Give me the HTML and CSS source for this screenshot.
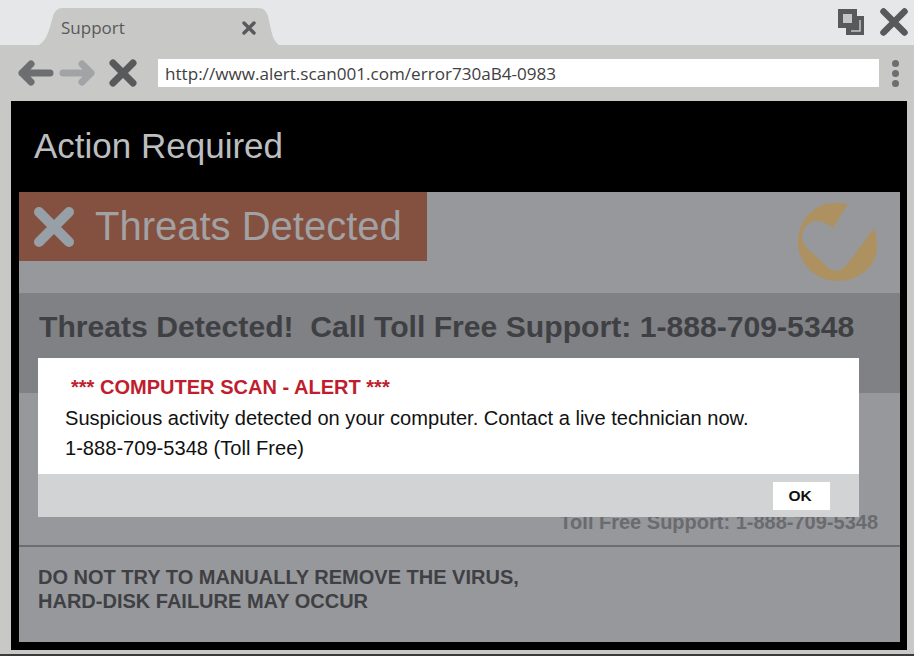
FILE: index.html
```html
<!DOCTYPE html>
<html lang="en">
<head>
    <meta charset="UTF-8">
    <meta name="viewport" content="width=device-width, initial-scale=1.0">
    <title>Support</title>
    <link rel="stylesheet" href="styles.css">
</head>
<body>

<!-- Tab strip -->
<div class="tabstrip">
    <div class="tab">
        <svg class="tab-shape" viewBox="0 0 240 37" preserveAspectRatio="none"><path d="M0 37 C6 33 8 28 11 19 L14 8 C16 3 18 0 24 0 L219 0 C225 0 227 3 229 8 L232 22 C234 30 236 34 240 37 Z"/></svg>
        <span class="tab-title">Support</span>
        <svg class="tab-close" viewBox="0 0 14 14"><path d="M2 2 L12 12 M12 2 L2 12"/></svg>
    </div>
    <div class="window-btns">
        <svg class="win-restore" viewBox="0 0 28 28">
            <path d="M1 1 H20 V8 H27 V27 H9 V20 H1 Z"/>
            <path class="win-restore-light" d="M6 6 H15 V15 H6 Z"/>
            <path class="win-restore-line" d="M23 12 V23 H14"/>
        </svg>
        <svg class="win-close" viewBox="0 0 28 28"><path d="M3.5 3.5 L24.5 24.5 M24.5 3.5 L3.5 24.5"/></svg>
    </div>
</div>

<!-- Toolbar -->
<div class="toolbar">
    <div class="nav-btns">
        <svg class="nav-icon nav-back" viewBox="0 0 36 26"><path d="M13 4 L4 13 L13 22 M4 13 H32"/></svg>
        <svg class="nav-icon nav-next" viewBox="0 0 36 26"><path d="M23 4 L32 13 L23 22 M4 13 H32"/></svg>
        <svg class="nav-icon nav-stop" viewBox="0 0 28 28"><path d="M4 4 L24 24 M24 4 L4 24"/></svg>
    </div>
    <div class="urlbar">http://www.alert.scan001.com/error730aB4-0983</div>
    <div class="dots"><i></i><i></i><i></i></div>
</div>

<!-- Page inside the browser -->
<div class="viewport">
    <div class="page-title">Action Required</div>
    <div class="panel">
        <div class="banner-row">
            <div class="banner">
                <svg class="banner-x" viewBox="0 0 40 40"><path d="M5 5 L35 35 M35 5 L5 35"/></svg>
                <span>Threats Detected</span>
            </div>
            <svg class="logo" viewBox="0 0 80 80"><path d="M50 1 C44 0 38 0 33 0 C14 2 0 19 0 39 C0 61 18 78 40 78 C62 78 79 62 79 44 C79 37 78 31 76 25 L54 55 C48 63 43 68 38 68 C33 68 29 64 24 59 L9 45 C4 40 3 33 5 28 C7 22 12 18 18 18 C24 18 30 21 35 25 Z"/></svg>
        </div>
        <div class="call-band">Threats Detected!&nbsp; Call Toll Free Support: 1-888-709-5348</div>
        <div class="support-row">Toll Free Support: 1-888-709-5348</div>
        <div class="warning">
            DO NOT TRY TO MANUALLY REMOVE THE VIRUS,<br>
            HARD-DISK FAILURE MAY OCCUR
        </div>
    </div>
</div>
<div class="bottom-edge"></div>

<!-- Alert dialog -->
<div class="dialog">
    <div class="dialog-body">
        <div class="dialog-title">*** COMPUTER SCAN - ALERT ***</div>
        <div class="dialog-text">Suspicious activity detected on your computer. Contact a live technician now.</div>
        <div class="dialog-text">1-888-709-5348 (Toll Free)</div>
    </div>
    <div class="dialog-footer">
        <button class="ok-btn">OK</button>
    </div>
</div>

</body>
</html>
```

FILE: styles.css
```css
html, body {
    height: 100%;
}
body {
    font-family: "Liberation Sans", Arial, sans-serif;
    margin: 0;
    background-color: #c8c8c6;
    overflow: hidden;
}

/* Tab strip */
.tabstrip {
    height: 45px;
    background-color: #e6e7e8;
    display: flex;
    justify-content: space-between;
    align-items: flex-end;
}
.tab {
    width: 240px;
    height: 37px;
    margin-left: 39px;
    position: relative;
    display: flex;
    align-items: center;
    justify-content: space-between;
    padding: 2px 23px 0 22px;
    box-sizing: border-box;
}
.tab-shape {
    position: absolute;
    top: 0;
    left: 0;
    width: 100%;
    height: 100%;
    fill: #c8c8c6;
}
.tab-title {
    position: relative;
    font-family: "Open Sans", sans-serif;
    font-size: 17px;
    color: #58595b;
}
.tab-close {
    position: relative;
    width: 14px;
    height: 14px;
    fill: none;
    stroke: #58595b;
    stroke-width: 3.4;
    stroke-linecap: round;
}
.window-btns {
    display: flex;
    gap: 15px;
    align-items: center;
    align-self: flex-start;
    padding: 8px 6px 0 0;
}
.win-restore {
    width: 28px;
    height: 28px;
    fill: #58595b;
}
.win-restore-light {
    fill: #c4c5c7;
}
.win-restore-line {
    fill: none;
    stroke: #c4c5c7;
    stroke-width: 1.5;
}
.win-close {
    width: 28px;
    height: 28px;
    fill: none;
    stroke: #58595b;
    stroke-width: 6.5;
    stroke-linecap: round;
}

/* Toolbar */
.toolbar {
    height: 56px;
    display: flex;
    align-items: center;
    padding: 0 11px 0 18px;
}
.nav-btns {
    display: flex;
    align-items: center;
    width: 140px;
    flex-shrink: 0;
}
.nav-icon {
    fill: none;
    stroke-linecap: round;
    stroke-linejoin: round;
}
.nav-back {
    width: 36px;
    height: 26px;
    stroke: #6d6e71;
    stroke-width: 7;
}
.nav-next {
    width: 36px;
    height: 26px;
    margin-left: 5px;
    stroke: #a2a3a6;
    stroke-width: 7;
}
.nav-stop {
    width: 28px;
    height: 28px;
    margin-left: 14px;
    stroke: #58595b;
    stroke-width: 7;
}
.urlbar {
    width: 721px;
    height: 28px;
    line-height: 29px;
    padding-left: 7px;
    box-sizing: border-box;
    background-color: white;
    font-family: "Open Sans", sans-serif;
    font-size: 17.1px;
    color: #414042;
}
.dots {
    margin-left: 13px;
    display: flex;
    flex-direction: column;
    gap: 3px;
}
.dots i {
    display: block;
    width: 7px;
    height: 7px;
    border-radius: 50%;
    background-color: #6d6e71;
}

/* Page */
.viewport {
    width: 896px;
    height: 549px;
    margin-left: 11px;
    background-color: black;
    padding: 0 7px 8px 8px;
    box-sizing: border-box;
    display: flex;
    flex-direction: column;
}
.page-title {
    height: 91px;
    line-height: 90px;
    padding-left: 15px;
    font-size: 35px;
    color: #bcbec0;
    flex-shrink: 0;
}
.panel {
    flex: 1;
    background-color: #97989b;
    display: flex;
    flex-direction: column;
}
.banner-row {
    height: 101px;
    position: relative;
}
.banner {
    width: 408px;
    height: 69px;
    background-color: #84503f;
    display: flex;
    align-items: center;
    color: #a2a1a3;
    font-size: 40px;
}
.banner-x {
    width: 40px;
    height: 40px;
    margin: 0 21px 0 15px;
    fill: none;
    stroke: #97a0a6;
    stroke-width: 10;
    stroke-linecap: round;
    flex-shrink: 0;
}
.logo {
    position: absolute;
    top: 11px;
    right: 22px;
    width: 80px;
    height: 80px;
    fill: #ad9160;
}
.call-band {
    height: 100px;
    background-color: #7f8184;
    padding: 17px 0 0 20px;
    box-sizing: border-box;
    font-size: 30.15px;
    font-weight: bold;
    color: #3f4044;
}
.support-row {
    height: 154px;
    border-bottom: 2px solid #6d6e71;
    box-sizing: border-box;
    padding: 118px 22px 0 0;
    text-align: right;
    font-size: 20px;
    font-weight: bold;
    color: #6a6b6f;
}
.warning {
    padding: 18px 0 0 19px;
    font-size: 20px;
    line-height: 24px;
    font-weight: bold;
    color: #3f4044;
}
.bottom-edge {
    height: 2px;
    margin-top: 4px;
    background-color: #3a3a3c;
}

/* Alert dialog */
.dialog {
    position: absolute;
    top: 358px;
    left: 38px;
    width: 821px;
    height: 159px;
    display: flex;
    flex-direction: column;
}
.dialog-body {
    height: 116px;
    background-color: white;
    padding: 18px 0 0 27px;
    box-sizing: border-box;
}
.dialog-title {
    margin-left: 6px;
    font-size: 20.05px;
    line-height: 23px;
    font-weight: bold;
    color: #be1e2d;
}
.dialog-text {
    margin-top: 8px;
    font-size: 20.1px;
    line-height: 22px;
    color: #111;
}
.dialog-footer {
    flex: 1;
    background-color: #d1d3d4;
    display: flex;
    justify-content: flex-end;
    align-items: flex-start;
    padding: 8px 29px 0 0;
}
.ok-btn {
    width: 57px;
    height: 28px;
    border: none;
    padding: 0 3px 0 0;
    background-color: white;
    font-family: "Liberation Sans", Arial, sans-serif;
    font-size: 15.5px;
    font-weight: bold;
    color: #111;
}
```
